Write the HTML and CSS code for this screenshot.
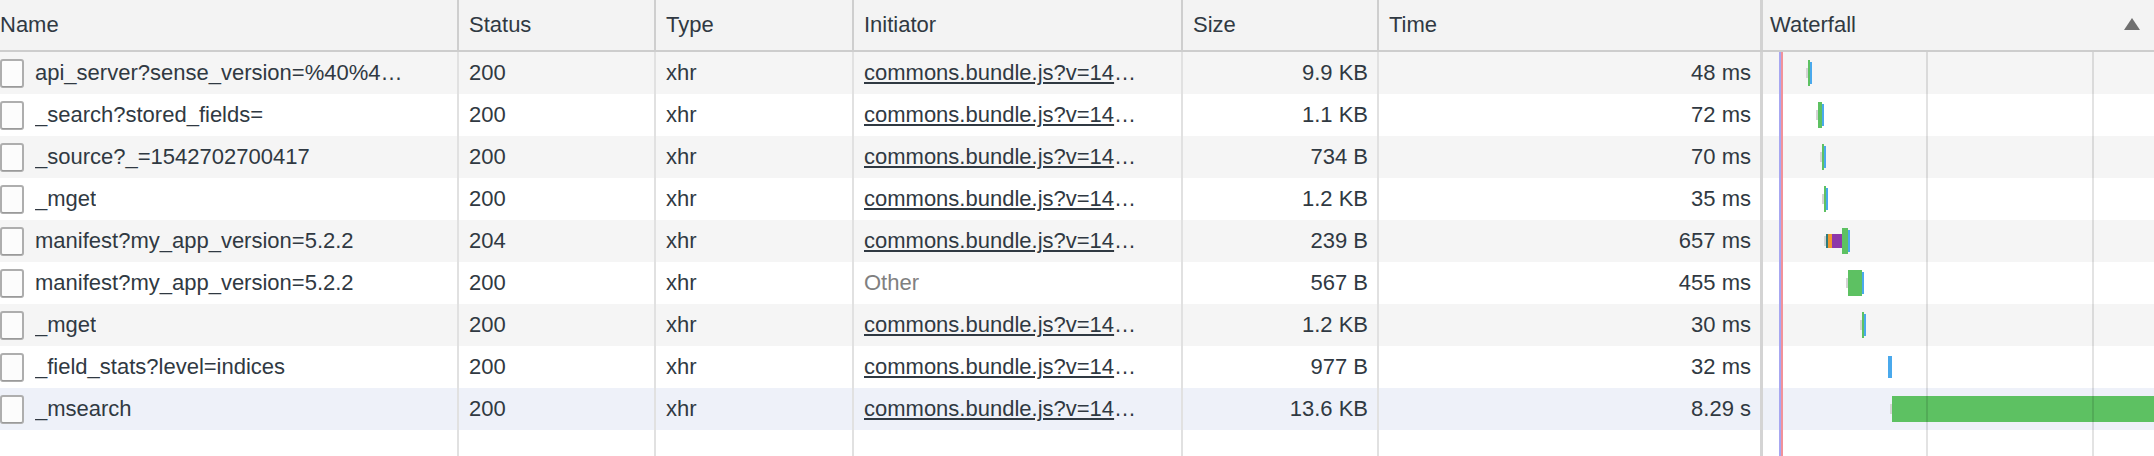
FILE: index.html
```html
<!DOCTYPE html>
<html>
<head>
<meta charset="utf-8">
<link rel="stylesheet" href="styles.css">
</head>
<body>
<div class="grid-view">
  <div class="cols header">
    <div class="cell name-h">Name</div>
    <div class="cell">Status</div>
    <div class="cell">Type</div>
    <div class="cell">Initiator</div>
    <div class="cell">Size</div>
    <div class="cell">Time</div>
    <div class="cell wf wf-h"><span>Waterfall</span><svg class="sort" width="16" height="12" viewBox="0 0 16 12"><polygon points="8,0 16,12 0,12" fill="#6f6f6f"/></svg></div>
  </div>
  <div class="rows">
    <div class="cols row odd">
      <div class="cell name"><svg class="file" width="24" height="29" viewBox="0 0 24 29"><rect x="1" y="1" width="22" height="27" rx="2" fill="#fcfcfc" stroke="#aeaeae" stroke-width="2"/><line x1="2" y1="27.5" x2="22" y2="27.5" stroke="#9a9a9a" stroke-width="1"/></svg><span class="txt">api_server?sense_version=%40%4…</span></div>
      <div class="cell">200</div>
      <div class="cell">xhr</div>
      <div class="cell"><a class="link">commons.bundle.js?v=14</a>…</div>
      <div class="cell num">9.9 KB</div>
      <div class="cell num">48 ms</div>
      <div class="cell wf"><div class="bars" style="margin-left:43px"><i class="seg gray" style="width:2px"></i><i class="seg green" style="width:2px"></i><i class="seg blue" style="width:2px"></i></div></div>
    </div>
    <div class="cols row">
      <div class="cell name"><svg class="file" width="24" height="29" viewBox="0 0 24 29"><rect x="1" y="1" width="22" height="27" rx="2" fill="#fcfcfc" stroke="#aeaeae" stroke-width="2"/><line x1="2" y1="27.5" x2="22" y2="27.5" stroke="#9a9a9a" stroke-width="1"/></svg><span class="txt">_search?stored_fields=</span></div>
      <div class="cell">200</div>
      <div class="cell">xhr</div>
      <div class="cell"><a class="link">commons.bundle.js?v=14</a>…</div>
      <div class="cell num">1.1 KB</div>
      <div class="cell num">72 ms</div>
      <div class="cell wf"><div class="bars" style="margin-left:53px"><i class="seg gray" style="width:2px"></i><i class="seg green" style="width:4px"></i><i class="seg blue" style="width:2px"></i></div></div>
    </div>
    <div class="cols row odd">
      <div class="cell name"><svg class="file" width="24" height="29" viewBox="0 0 24 29"><rect x="1" y="1" width="22" height="27" rx="2" fill="#fcfcfc" stroke="#aeaeae" stroke-width="2"/><line x1="2" y1="27.5" x2="22" y2="27.5" stroke="#9a9a9a" stroke-width="1"/></svg><span class="txt">_source?_=1542702700417</span></div>
      <div class="cell">200</div>
      <div class="cell">xhr</div>
      <div class="cell"><a class="link">commons.bundle.js?v=14</a>…</div>
      <div class="cell num">734 B</div>
      <div class="cell num">70 ms</div>
      <div class="cell wf"><div class="bars" style="margin-left:57px"><i class="seg gray" style="width:2px"></i><i class="seg green" style="width:2px"></i><i class="seg blue" style="width:2px"></i></div></div>
    </div>
    <div class="cols row">
      <div class="cell name"><svg class="file" width="24" height="29" viewBox="0 0 24 29"><rect x="1" y="1" width="22" height="27" rx="2" fill="#fcfcfc" stroke="#aeaeae" stroke-width="2"/><line x1="2" y1="27.5" x2="22" y2="27.5" stroke="#9a9a9a" stroke-width="1"/></svg><span class="txt">_mget</span></div>
      <div class="cell">200</div>
      <div class="cell">xhr</div>
      <div class="cell"><a class="link">commons.bundle.js?v=14</a>…</div>
      <div class="cell num">1.2 KB</div>
      <div class="cell num">35 ms</div>
      <div class="cell wf"><div class="bars" style="margin-left:59px"><i class="seg gray" style="width:2px"></i><i class="seg green" style="width:2px"></i><i class="seg blue" style="width:2px"></i></div></div>
    </div>
    <div class="cols row odd">
      <div class="cell name"><svg class="file" width="24" height="29" viewBox="0 0 24 29"><rect x="1" y="1" width="22" height="27" rx="2" fill="#fcfcfc" stroke="#aeaeae" stroke-width="2"/><line x1="2" y1="27.5" x2="22" y2="27.5" stroke="#9a9a9a" stroke-width="1"/></svg><span class="txt">manifest?my_app_version=5.2.2</span></div>
      <div class="cell">204</div>
      <div class="cell">xhr</div>
      <div class="cell"><a class="link">commons.bundle.js?v=14</a>…</div>
      <div class="cell num">239 B</div>
      <div class="cell num">657 ms</div>
      <div class="cell wf"><div class="bars" style="margin-left:61px"><i class="seg gray" style="width:2px"></i><i class="seg teal" style="width:2px"></i><i class="seg orange" style="width:4px"></i><i class="seg purple" style="width:10px"></i><i class="seg green" style="width:6px"></i><i class="seg blue" style="width:2px"></i></div></div>
    </div>
    <div class="cols row">
      <div class="cell name"><svg class="file" width="24" height="29" viewBox="0 0 24 29"><rect x="1" y="1" width="22" height="27" rx="2" fill="#fcfcfc" stroke="#aeaeae" stroke-width="2"/><line x1="2" y1="27.5" x2="22" y2="27.5" stroke="#9a9a9a" stroke-width="1"/></svg><span class="txt">manifest?my_app_version=5.2.2</span></div>
      <div class="cell">200</div>
      <div class="cell">xhr</div>
      <div class="cell other">Other</div>
      <div class="cell num">567 B</div>
      <div class="cell num">455 ms</div>
      <div class="cell wf"><div class="bars" style="margin-left:83px"><i class="seg gray" style="width:2px"></i><i class="seg green" style="width:14px"></i><i class="seg blue" style="width:2px"></i></div></div>
    </div>
    <div class="cols row odd">
      <div class="cell name"><svg class="file" width="24" height="29" viewBox="0 0 24 29"><rect x="1" y="1" width="22" height="27" rx="2" fill="#fcfcfc" stroke="#aeaeae" stroke-width="2"/><line x1="2" y1="27.5" x2="22" y2="27.5" stroke="#9a9a9a" stroke-width="1"/></svg><span class="txt">_mget</span></div>
      <div class="cell">200</div>
      <div class="cell">xhr</div>
      <div class="cell"><a class="link">commons.bundle.js?v=14</a>…</div>
      <div class="cell num">1.2 KB</div>
      <div class="cell num">30 ms</div>
      <div class="cell wf"><div class="bars" style="margin-left:97px"><i class="seg gray" style="width:2px"></i><i class="seg green" style="width:2px"></i><i class="seg blue" style="width:2px"></i></div></div>
    </div>
    <div class="cols row">
      <div class="cell name"><svg class="file" width="24" height="29" viewBox="0 0 24 29"><rect x="1" y="1" width="22" height="27" rx="2" fill="#fcfcfc" stroke="#aeaeae" stroke-width="2"/><line x1="2" y1="27.5" x2="22" y2="27.5" stroke="#9a9a9a" stroke-width="1"/></svg><span class="txt">_field_stats?level=indices</span></div>
      <div class="cell">200</div>
      <div class="cell">xhr</div>
      <div class="cell"><a class="link">commons.bundle.js?v=14</a>…</div>
      <div class="cell num">977 B</div>
      <div class="cell num">32 ms</div>
      <div class="cell wf"><div class="bars" style="margin-left:125px"><i class="seg blue" style="width:4px"></i></div></div>
    </div>
    <div class="cols row selected">
      <div class="cell name"><svg class="file" width="24" height="29" viewBox="0 0 24 29"><rect x="1" y="1" width="22" height="27" rx="2" fill="#fcfcfc" stroke="#aeaeae" stroke-width="2"/><line x1="2" y1="27.5" x2="22" y2="27.5" stroke="#9a9a9a" stroke-width="1"/></svg><span class="txt">_msearch</span></div>
      <div class="cell">200</div>
      <div class="cell">xhr</div>
      <div class="cell"><a class="link">commons.bundle.js?v=14</a>…</div>
      <div class="cell num">13.6 KB</div>
      <div class="cell num">8.29 s</div>
      <div class="cell wf"><div class="bars" style="margin-left:127px"><i class="seg gray" style="width:2px"></i><i class="seg green" style="width:400px"></i></div></div>
    </div>
    <div class="cols filler">
      <div class="cell"></div><div class="cell"></div><div class="cell"></div><div class="cell"></div><div class="cell"></div><div class="cell"></div><div class="cell wf"></div>
    </div>
    <div class="wf-overlay">
      <div class="gridline" style="left:163px"></div>
      <div class="gridline" style="left:329px"></div>
      <div class="event dcl" style="left:16px"></div>
      <div class="event load" style="left:18px"></div>
    </div>
  </div>
</div>
</body>
</html>
```

FILE: styles.css
```css
html, body {
  margin: 0;
  padding: 0;
  height: 456px;
  overflow: hidden;
  background: #ffffff;
}

.grid-view {
  display: flex;
  flex-direction: column;
  height: 456px;
  font-family: "Liberation Sans", Arial, sans-serif;
  font-size: 22px;
  color: #303942;
}

.cols {
  display: grid;
  grid-template-columns: 457px 197px 198px 329px 196px 383px 1fr;
}

.cell {
  box-sizing: border-box;
  padding: 0 9px 0 10px;
  white-space: nowrap;
  overflow: hidden;
  text-overflow: ellipsis;
  border-left: 2px solid #e1e1e1;
}

.cell:first-child {
  border-left: none;
}

.header {
  height: 52px;
  background: #f3f3f3;
  border-bottom: 2px solid #cdcdcd;
  box-sizing: border-box;
}

.header .cell {
  line-height: 50px;
  border-left-color: #cecece;
}

.header .name-h {
  padding-left: 0;
}

.cell.wf {
  border-left: 3px solid #d4d4d4;
  padding: 0;
}

.header .wf-h {
  display: flex;
  align-items: center;
  justify-content: space-between;
  padding: 0 14px 0 7px;
  border-left: 3px solid #d2d2d2;
}

.sort {
  display: block;
  margin-top: -2px;
}

.rows {
  position: relative;
  flex: 1;
  display: flex;
  flex-direction: column;
}

.row {
  height: 42px;
  line-height: 42px;
  background: #ffffff;
}

.row.odd {
  background: #f5f5f5;
}

.row.selected {
  background: #eef1f9;
}

.filler {
  flex: 1;
}

.cell.name {
  display: flex;
  align-items: center;
  padding-left: 0;
  padding-right: 14px;
}

.file {
  flex-shrink: 0;
  display: block;
  margin-right: 11px;
}

.txt {
  overflow: hidden;
  text-overflow: ellipsis;
}

.num {
  text-align: right;
}

.link {
  text-decoration: underline;
  color: #303942;
}

.other {
  color: #808080;
}

.bars {
  display: flex;
  align-items: center;
  height: 42px;
}

.seg {
  display: block;
  flex-shrink: 0;
}

.seg.gray { height: 10px; background: #d4d4d4; }
.seg.teal { height: 14px; background: #2e7c7b; }
.seg.orange { height: 14px; background: #f3982f; }
.seg.purple { height: 14px; background: #8e37a9; }
.seg.green { height: 26px; background: #5dc162; }
.seg.blue { height: 22px; background: #4aa9ec; }

.wf-overlay {
  position: absolute;
  top: 0;
  bottom: 0;
  left: 1763px;
  right: 0;
  pointer-events: none;
}

.gridline {
  position: absolute;
  top: 0;
  bottom: 0;
  width: 2px;
  background: rgba(0, 0, 0, 0.11);
}

.event {
  position: absolute;
  top: 0;
  bottom: 0;
  width: 2px;
}

.event.dcl { background: #a7a7f1; }
.event.load { background: #f2929b; }
```
